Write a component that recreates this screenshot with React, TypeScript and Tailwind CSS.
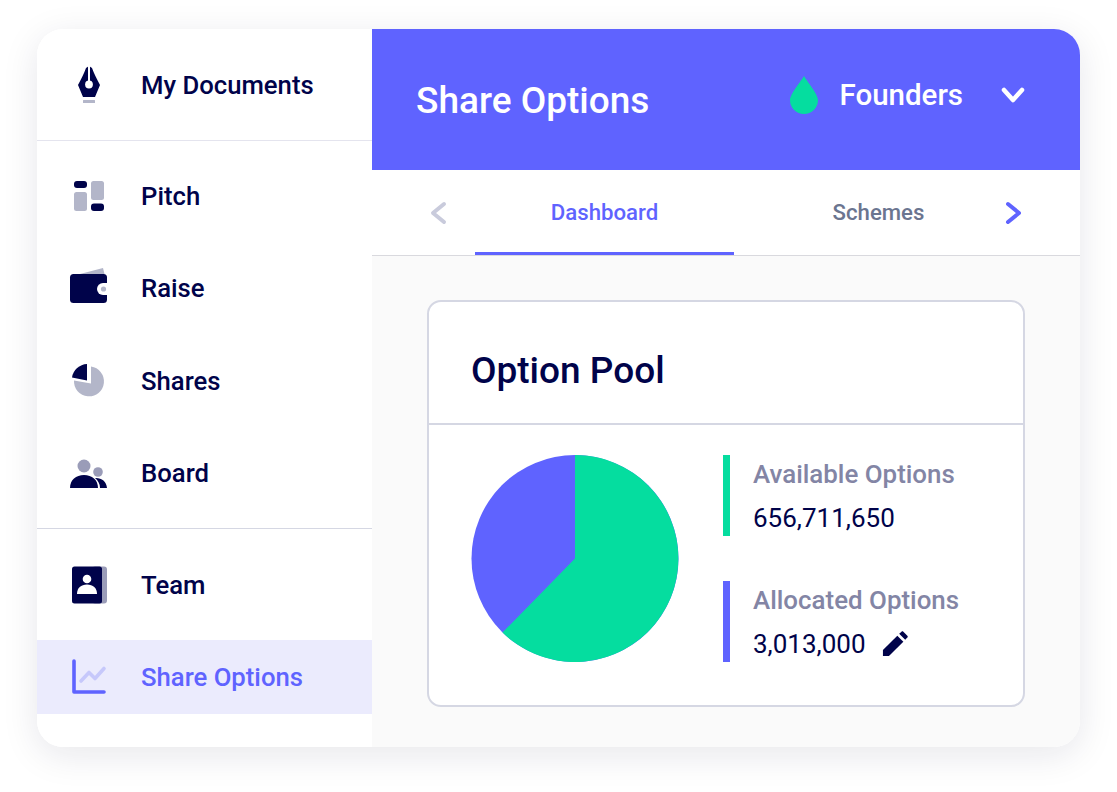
const navy = '#00034a'

function NibIcon() {
  return (
    <svg width="40" height="40" viewBox="0 0 40 40" className="overflow-visible">
      <path d="M18 3 L21 1 L24 3 C26 9 29 14 32 20 L27 32 H15 L10 20 C13 14 16 9 18 3 Z" fill={navy} />
      <rect x="20" y="1" width="2" height="18" fill="#fff" />
      <circle cx="21" cy="19.5" r="3.9" fill="#fff" />
      <rect x="15" y="35" width="12" height="3" rx="0.5" fill="#b3b6c9" />
    </svg>
  )
}

function PitchIcon() {
  return (
    <svg width="40" height="40" viewBox="0 0 40 40" className="overflow-visible">
      <rect x="6" y="5" width="13" height="7" rx="3" fill={navy} />
      <rect x="6" y="16" width="13" height="19" rx="2.5" fill="#b3b6c9" />
      <rect x="23" y="5" width="13" height="19" rx="2.5" fill="#b3b6c9" />
      <rect x="23" y="27.5" width="13" height="7.5" rx="3" fill={navy} />
    </svg>
  )
}

function WalletIcon() {
  return (
    <svg width="40" height="40" viewBox="0 0 40 40" className="overflow-visible">
      <path d="M12 5 L35 -1 L36.5 5 Z" fill="#b3b6c9" />
      <rect x="2" y="5" width="37" height="29" rx="3.5" fill={navy} />
      <path d="M39 14 H35 A6 6 0 0 0 35 26 H39 Z" fill="#fff" />
      <circle cx="35.5" cy="20" r="2.6" fill="#b3b6c9" />
    </svg>
  )
}

function SharesIcon() {
  return (
    <svg width="40" height="40" viewBox="0 0 40 40" className="overflow-visible">
      <path d="M23 5.5 A15 15 0 1 1 6 19.5 L23 22.5 Z" fill="#b3b6c9" />
      <path d="M19 3 V19.5 L4 16.5 A16 16 0 0 1 19 3 Z" fill={navy} />
    </svg>
  )
}

function BoardIcon() {
  return (
    <svg width="40" height="40" viewBox="0 0 40 40" className="overflow-visible">
      <circle cx="16" cy="12" r="6.5" fill="#9a9cb8" />
      <circle cx="30" cy="18" r="4.8" fill="#9a9cb8" />
      <path d="M27 24 C33 23.5 38.5 27 39 34 H32 C32 30 30 26.5 27 24 Z" fill={navy} />
      <path d="M2 34 C2 26 8 21 16 21 C24 21 30 26 30 34 Z" fill={navy} />
    </svg>
  )
}

function TeamIcon() {
  return (
    <svg width="40" height="40" viewBox="0 0 40 40" className="overflow-visible">
      <rect x="24" y="1.5" width="15" height="37" rx="3" fill="#9a9cb8" />
      <rect x="4" y="1.5" width="30" height="37" rx="2.5" fill={navy} />
      <circle cx="19" cy="14" r="4.3" fill="#fff" />
      <path d="M9 29 C9 23 13 19.5 19 19.5 C25 19.5 29 23 29 29 Z" fill="#fff" />
    </svg>
  )
}

function ChartIcon() {
  return (
    <svg width="40" height="40" viewBox="0 0 40 40" className="overflow-visible">
      <path d="M6 4 V35 H36" fill="none" stroke="#5f63ff" strokeWidth="3.6" strokeLinecap="round" strokeLinejoin="round" />
      <path d="M13 24 L21 15.5 L27 21.5 L36 11.5" fill="none" stroke="#c6c8fb" strokeWidth="3.6" strokeLinecap="round" strokeLinejoin="round" />
    </svg>
  )
}

function NavItem({ icon, label, active = false }: { icon: React.ReactNode; label: string; active?: boolean }) {
  return (
    <div className={`flex h-[74px] items-center gap-[33px] pl-[31px] text-[25.7px] font-medium ${active ? 'bg-[#ebebfd] text-[#5f63ff]' : 'text-[#00034a]'}`}>
      {icon}
      <span>{label}</span>
    </div>
  )
}

function Legend({ color, label, children }: { color: string; label: string; children: React.ReactNode }) {
  return (
    <div className="flex h-[81px] gap-[23px]">
      <div className={`w-[7px] ${color}`} />
      <div className="flex flex-col justify-between pt-[3px] pb-[1px]">
        <div className="text-[25.9px] leading-[32px] font-medium text-[#8385a5]">{label}</div>
        <div className="flex items-center gap-[17px] text-[26px] leading-[34px] text-[#00034a]">{children}</div>
      </div>
    </div>
  )
}

export default function App() {
  return (
    <div className="min-h-[792px] bg-white pt-[29px] pl-[37px] font-['Roboto',sans-serif]">
      <div className="flex h-[718px] w-[1043px] overflow-hidden rounded-[26px] bg-white shadow-[0_8px_36px_rgba(20,20,60,0.10)]">
        <aside className="w-[335px] shrink-0 bg-white">
          <div className="flex h-[112px] items-center gap-[33px] border-b border-[#e4e4ee] pl-[31px] text-[25.7px] font-medium text-[#00034a]">
            <NibIcon />
            <span className="pt-[2px]">My Documents</span>
          </div>
          <div className="flex h-[388px] flex-col gap-[18.5px] border-b border-[#d5d7e3] pt-[18px]">
            <NavItem icon={<PitchIcon />} label="Pitch" />
            <NavItem icon={<WalletIcon />} label="Raise" />
            <NavItem icon={<SharesIcon />} label="Shares" />
            <NavItem icon={<BoardIcon />} label="Board" />
          </div>
          <div className="flex flex-col gap-[18px] pt-[19px]">
            <NavItem icon={<TeamIcon />} label="Team" />
            <NavItem icon={<ChartIcon />} label="Share Options" active />
          </div>
        </aside>

        <main className="flex min-w-0 flex-1 flex-col bg-[#fafafa]">
          <header className="flex h-[141px] items-center justify-between bg-[#5f63ff] pr-[55px] pl-[44px] text-white">
            <h1 className="pt-[2px] text-[37px] font-medium">Share Options</h1>
            <div className="mb-[10px] flex items-center">
              <svg width="28" height="38" viewBox="0 0 28 38">
                <path d="M14 0 C16 4 28 18 28 24 A14 14 0 0 1 0 24 C0 18 12 4 14 0 Z" fill="#05dd9f" />
              </svg>
              <span className="ml-[21px] pt-[2px] text-[29.5px] font-medium">Founders</span>
              <svg width="24" height="18" viewBox="0 0 24 18" className="ml-[38px]">
                <path d="M3 4 L12 14 L21 4" fill="none" stroke="#fff" strokeWidth="4.5" strokeLinecap="round" strokeLinejoin="round" />
              </svg>
            </div>
          </header>

          <nav className="flex h-[86px] items-center border-b border-[#d9d9de] bg-white pl-[57px]">
            <svg width="18" height="24" viewBox="0 0 18 24">
              <path d="M15 3 L4 12 L15 21" fill="none" stroke="#c9cbdc" strokeWidth="4" strokeLinecap="round" strokeLinejoin="round" />
            </svg>
            <div className="ml-[28px] flex h-full w-[259px] items-center justify-center border-b-[3px] border-[#5f63ff] pt-[3px] text-[22.2px] font-medium text-[#5f63ff]">Dashboard</div>
            <div className="ml-[15px] flex h-full w-[259px] items-center justify-center text-[22.2px] font-medium text-[#6b7590]">Schemes</div>
            <svg width="18" height="24" viewBox="0 0 18 24" className="-ml-[3px]">
              <path d="M3 3 L14 12 L3 21" fill="none" stroke="#5f63ff" strokeWidth="4" strokeLinecap="round" strokeLinejoin="round" />
            </svg>
          </nav>

          <div className="pt-[44px] pl-[55px]">
            <section className="h-[407px] w-[598px] rounded-[14px] border-2 border-[#d5d7e3] bg-white">
              <h2 className="flex h-[123px] items-center border-b-2 border-[#d5d7e3] pt-[16px] pl-[42px] text-[37px] font-medium text-[#00034a]">Option Pool</h2>
              <div className="flex pt-[29px] pl-[41px]">
                <svg width="210" height="210" viewBox="0 0 210 210" className="shrink-0">
                  <circle cx="105" cy="104.5" r="103.5" fill="#5f63ff" />
                  <path d="M105 104.5 V1 A103.5 103.5 0 1 1 32.5 178.5 Z" fill="#05dd9f" />
                </svg>
                <div className="ml-[43px] flex flex-col gap-[45px] pt-[1px]">
                  <Legend color="bg-[#05dd9f]" label="Available Options">
                    <span>656,711,650</span>
                  </Legend>
                  <Legend color="bg-[#5f63ff]" label="Allocated Options">
                    <span>3,013,000</span>
                    <svg width="26" height="26" viewBox="0 0 28 28" className="-ml-[1px]">
                      <path d="M1 27 V20.5 L16.5 5 L23 11.5 L7.5 27 Z" fill="#00034a" />
                      <path d="M18.5 3 L21 0.7 C21.6 0.1 22.4 0.1 23 0.7 L27.3 5 C27.9 5.6 27.9 6.4 27.3 7 L25 9.5 Z" fill="#00034a" />
                    </svg>
                  </Legend>
                </div>
              </div>
            </section>
          </div>
        </main>
      </div>
    </div>
  )
}
